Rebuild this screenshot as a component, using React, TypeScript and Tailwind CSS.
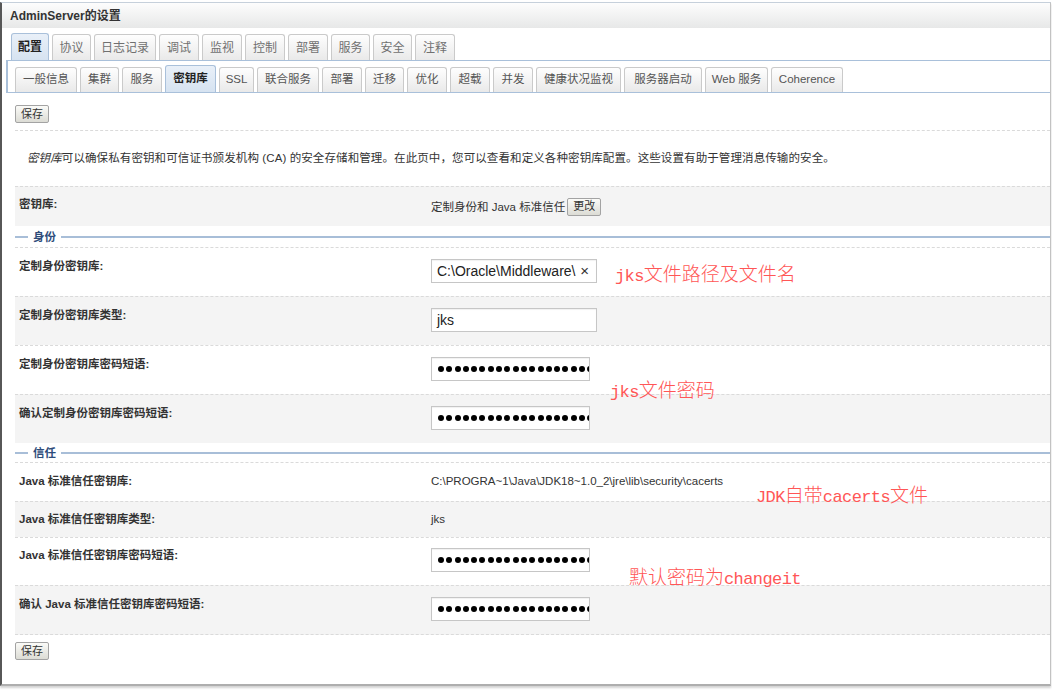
import React from "react";

const topTabs = [
  { label: "配置", w: "w-[38px]", active: true },
  { label: "协议", w: "w-[39px]" },
  { label: "日志记录", w: "w-[62px]" },
  { label: "调试", w: "w-[40px]" },
  { label: "监视", w: "w-[40px]" },
  { label: "控制", w: "w-[40px]" },
  { label: "部署", w: "w-[40px]" },
  { label: "服务", w: "w-[39px]" },
  { label: "安全", w: "w-[39px]" },
  { label: "注释", w: "w-[40px]" },
];

const subTabs = [
  { label: "一般信息", w: "w-[62px]" },
  { label: "集群", w: "w-[39px]" },
  { label: "服务", w: "w-[40px]" },
  { label: "密钥库", w: "w-[51px]", active: true },
  { label: "SSL", w: "w-[35px]" },
  { label: "联合服务", w: "w-[62px]" },
  { label: "部署", w: "w-[40px]" },
  { label: "迁移", w: "w-[39px]" },
  { label: "优化", w: "w-[40px]" },
  { label: "超载", w: "w-[40px]" },
  { label: "并发", w: "w-[40px]" },
  { label: "健康状况监视", w: "w-[85px]" },
  { label: "服务器启动", w: "w-[78px]" },
  { label: "Web 服务", w: "w-[63px]" },
  { label: "Coherence", w: "w-[72px]" },
];

const Button = ({ children }: { children: React.ReactNode }) => (
  <button className="w-[34px] h-[18px] border border-[#a3a3a3] rounded-[2px] bg-linear-to-b from-[#fbfbf8] to-[#dcdcd5] text-[11px] leading-none text-[#333] flex items-center justify-center">
    {children}
  </button>
);

const TextBox = ({ children, clear }: { children: React.ReactNode; clear?: boolean }) => (
  <div className="w-[166px] h-[24px] border border-[#c6c6c6] bg-white flex items-center justify-between pl-[5px] pr-[7px] text-[14px] text-[#222] shadow-[inset_0_1px_1px_rgba(0,0,0,0.06)]">
    <span>{children}</span>
    {clear && <span className="text-[15px] text-[#333]">×</span>}
  </div>
);

const PasswordBox = () => (
  <div className="w-[159px] h-[24px] border border-[#c6c6c6] bg-white overflow-hidden flex items-center gap-[2.3px] pl-[6px] shadow-[inset_0_1px_1px_rgba(0,0,0,0.06)]">
    {Array.from({ length: 19 }).map((_, i) => (
      <span key={i} className="w-[6px] h-[6px] rounded-full bg-black shrink-0" />
    ))}
  </div>
);

const Row = ({
  label,
  children,
  gray,
  pad = "pt-[11px] pb-[13px]",
  last,
}: {
  label: React.ReactNode;
  children?: React.ReactNode;
  gray?: boolean;
  pad?: string;
  last?: boolean;
}) => (
  <div
    className={`flex border-t border-dashed border-[#dadada] ${gray ? "bg-[#f4f4f4]" : "bg-white"} ${pad} ${
      last ? "border-b" : ""
    }`}
  >
    <div className="w-[416px] shrink-0 pl-[4px] font-bold leading-[14px] text-[#333]">{label}</div>
    <div className="flex-1 leading-[14px] text-[#333]">{children}</div>
  </div>
);

const Section = ({ title, h }: { title: string; h: string }) => (
  <div className={`flex items-center ${h}`}>
    <div className="w-[13px] h-[2px] bg-[#a8bed8]" />
    <span className="px-[5px] font-bold text-[#2e4c7a] leading-[14px]">{title}</span>
    <div className="flex-1 h-[2px] bg-[#a8bed8]" />
  </div>
);

const Note = ({ className, children }: { className: string; children: React.ReactNode }) => (
  <div
    className={`absolute whitespace-nowrap text-[19px] leading-[22px] font-light text-[#ff5656] font-['Noto_Sans_CJK_SC',sans-serif] ${className}`}
  >
    {children}
  </div>
);

const Latin = ({ children }: { children: React.ReactNode }) => (
  <span className="font-['Liberation_Mono',monospace] text-[17px] tracking-[-0.6px]">{children}</span>
);

export default function App() {
  return (
    <div className="relative w-[1052px] h-[694px] bg-white overflow-hidden font-['Liberation_Sans','Noto_Sans_CJK_SC',sans-serif] text-[11.5px] text-[#333]">
      <div className="mt-[2px] w-[1051px] h-[684px] flex flex-col border-l-2 border-l-[#575757] border-t border-t-[#c6d0db] border-r border-r-[#c2c2c2] border-b-2 border-b-[#aeaeae] shadow-[0_2px_2px_rgba(0,0,0,0.18)]">
        {/* title bar */}
        <div className="h-[25px] shrink-0 pl-[8px] flex items-center bg-linear-to-b from-[#fdfdfd] to-[#e7e8e8] text-[12px] font-bold text-[#333]">
          AdminServer的设置
        </div>

        {/* main tabs */}
        <div className="h-[32px] shrink-0 pl-[9px] flex items-end gap-[3px]">
          {topTabs.map((t) => (
            <div
              key={t.label}
              className={`${t.w} rounded-t-[3px] border border-b-0 flex items-center justify-center text-[12px] ${
                t.active
                  ? "h-[27px] bg-linear-to-b from-[#e9f0f8] to-[#d6e3f1] border-[#a9c0da] font-bold text-[#222]"
                  : "h-[26px] bg-linear-to-b from-[#fefefe] to-[#e9e9e9] border-[#cacaca] text-[#707070]"
              }`}
            >
              {t.label}
            </div>
          ))}
        </div>

        {/* sub tabs */}
        <div className="ml-[4px] h-[33px] shrink-0 border-t border-b border-l-2 border-[#a9c0da] pl-[7px] flex items-end gap-[3px]">
          {subTabs.map((t) => (
            <div
              key={t.label}
              className={`${t.w} rounded-t-[3px] border border-b-0 flex items-center justify-center ${
                t.active
                  ? "h-[27px] bg-linear-to-b from-[#e9f0f8] to-[#d6e3f1] border-[#a9c0da] font-bold text-[#222]"
                  : "h-[25px] bg-linear-to-b from-[#fefefe] to-[#e9e9e9] border-[#cacaca] text-[#555]"
              }`}
            >
              {t.label}
            </div>
          ))}
        </div>

        {/* content */}
        <div className="pl-[13px] flex flex-col">
          <div className="mt-[12px]">
            <Button>保存</Button>
          </div>
          <div className="mt-[7px] border-b border-dashed border-[#dadada]" />
          <p className="mt-[20px] pl-[12px] leading-[14px] text-[#333] tracking-[0.1px]">
            <i>密钥库</i>可以确保私有密钥和可信证书颁发机构 (CA) 的安全存储和管理。在此页中，您可以查看和定义各种密钥库配置。这些设置有助于管理消息传输的安全。
          </p>

          <div className="mt-[21px]">
            <Row label="密钥库:" gray pad="pt-[10px] pb-[10px]">
              <div className="flex items-center gap-[2px] h-[19px]">
                <span>定制身份和 Java 标准信任</span>
                <Button>更改</Button>
              </div>
            </Row>

            <Section title="身份" h="h-[21px]" />
            <Row label="定制身份密钥库:">
              <TextBox clear>C:\Oracle\Middleware\</TextBox>
            </Row>
            <Row label="定制身份密钥库类型:" gray>
              <TextBox>jks</TextBox>
            </Row>
            <Row label="定制身份密钥库密码短语:">
              <PasswordBox />
            </Row>
            <Row label="确认定制身份密钥库密码短语:" gray>
              <PasswordBox />
            </Row>

            <Section title="信任" h="h-[19px]" />
            <Row label="Java 标准信任密钥库:">
              <span className="text-[11.5px]">C:\PROGRA~1\Java\JDK18~1.0_2\jre\lib\security\cacerts</span>
            </Row>
            <Row label="Java 标准信任密钥库类型:" gray pad="pt-[10px] pb-[11px]">
              jks
            </Row>
            <Row label="Java 标准信任密钥库密码短语:" pad="pt-[10px] pb-[13px]">
              <PasswordBox />
            </Row>
            <Row label="确认 Java 标准信任密钥库密码短语:" gray last>
              <PasswordBox />
            </Row>
          </div>

          <div className="mt-[7px]">
            <Button>保存</Button>
          </div>
        </div>
      </div>

      <Note className="left-[615px] top-[262px]">
        <Latin>jks</Latin>文件路径及文件名
      </Note>
      <Note className="left-[610px] top-[378px]">
        <Latin>jks</Latin>文件密码
      </Note>
      <Note className="left-[756px] top-[483px]">
        <Latin>JDK</Latin>自带<Latin>cacerts</Latin>文件
      </Note>
      <Note className="left-[629px] top-[565px]">
        默认密码为<Latin>changeit</Latin>
      </Note>
    </div>
  );
}
